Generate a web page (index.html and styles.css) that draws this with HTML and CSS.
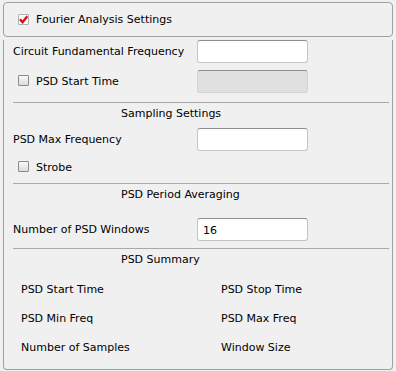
FILE: index.html
```html
<!DOCTYPE html>
<html lang="en">
<head>
    <meta charset="UTF-8">
    <meta name="viewport" content="width=device-width, initial-scale=1.0">
    <title>Fourier Analysis Settings</title>
    <link rel="stylesheet" href="styles.css">
</head>
<body>

<div class="panel">
    <div class="header">
        <span class="check checked">
            <svg width="10" height="9" viewBox="0 0 10 9"><path d="M1 4.2 L4 7.6 L9.2 0.8" fill="none" stroke="#d41414" stroke-width="2.6"/></svg>
        </span>
        <span>Fourier Analysis Settings</span>
    </div>

    <div class="body">
        <div class="row first">
            <label class="label">Circuit Fundamental Frequency</label>
            <input type="text" class="field">
        </div>
        <div class="row">
            <label class="label"><span class="check"></span>PSD Start Time</label>
            <input type="text" class="field" disabled>
        </div>

        <div class="sep top"></div>
        <div class="section">Sampling Settings</div>

        <div class="row">
            <label class="label">PSD Max Frequency</label>
            <input type="text" class="field">
        </div>
        <div class="row short">
            <label class="label"><span class="check"></span>Strobe</label>
        </div>

        <div class="sep"></div>
        <div class="section">PSD Period Averaging</div>

        <div class="row spaced">
            <label class="label">Number of PSD Windows</label>
            <input type="text" class="field" value="16">
        </div>

        <div class="sep"></div>
        <div class="section">PSD Summary</div>

        <div class="summary">
            <div>PSD Start Time</div>
            <div>PSD Stop Time</div>
            <div>PSD Min Freq</div>
            <div>PSD Max Freq</div>
            <div>Number of Samples</div>
            <div>Window Size</div>
        </div>
    </div>
</div>

</body>
</html>
```

FILE: styles.css
```css
body {
    margin: 0;
    padding: 2px 3px;
    background-color: #f0f0f0;
    font-family: "DejaVu Sans", sans-serif;
    font-size: 11px;
    color: #000;
}

.panel {
    width: 390px;
}

.header {
    height: 33px;
    display: flex;
    align-items: center;
    gap: 7px;
    padding-left: 14px;
    border: 1px solid #a0a0a0;
    border-radius: 4px;
}

.body {
    height: 329px;
    border: 1px solid #a0a0a0;
    border-top: none;
    border-radius: 0 0 4px 4px;
    padding: 0 4px 0 9px;
}

.check {
    display: inline-flex;
    align-items: center;
    justify-content: center;
    width: 9px;
    height: 9px;
    border: 1px solid #8a8a8a;
    border-radius: 1px;
    background: linear-gradient(#f8f8f8, #dcdcdc);
    margin-right: 7px;
    vertical-align: -1px;
}

.header .check {
    margin-right: 0;
    background: #fff;
    border-color: #b0b0b0;
}

.row {
    display: flex;
    align-items: center;
    height: 23px;
    margin-top: 7px;
}

.row.first {
    margin-top: 3px;
}

.row.short {
    height: 16px;
    margin-top: 9px;
}

.row.spaced {
    margin-top: 16px;
}

.row .check {
    margin-left: 5px;
}

.label {
    width: 184px;
    padding-bottom: 1px;
}

.field {
    box-sizing: border-box;
    width: 111px;
    height: 23px;
    margin: 0;
    padding: 2px 5px 0;
    border: 1px solid #c4c4c4;
    border-top-color: #8e8e8e;
    border-radius: 3px;
    background-color: #fff;
    font-family: "DejaVu Sans", sans-serif;
    font-size: 11px;
    color: #000;
}

.field:disabled {
    background-color: #e0e0e0;
    border-color: #d4d4d4;
    border-top-color: #8e8e8e;
}

.sep {
    height: 1px;
    background-color: #a8a8a8;
    margin-top: 7px;
    width: 376px;
}

.sep.top {
    margin-top: 9px;
}

.section {
    padding-left: 108px;
    height: 14px;
    line-height: 14px;
    margin-top: 4px;
}

.summary {
    display: grid;
    grid-template-columns: 200px 1fr;
    row-gap: 15px;
    padding-left: 8px;
    margin-top: 16px;
}

.summary div {
    height: 14px;
    line-height: 14px;
}
```
